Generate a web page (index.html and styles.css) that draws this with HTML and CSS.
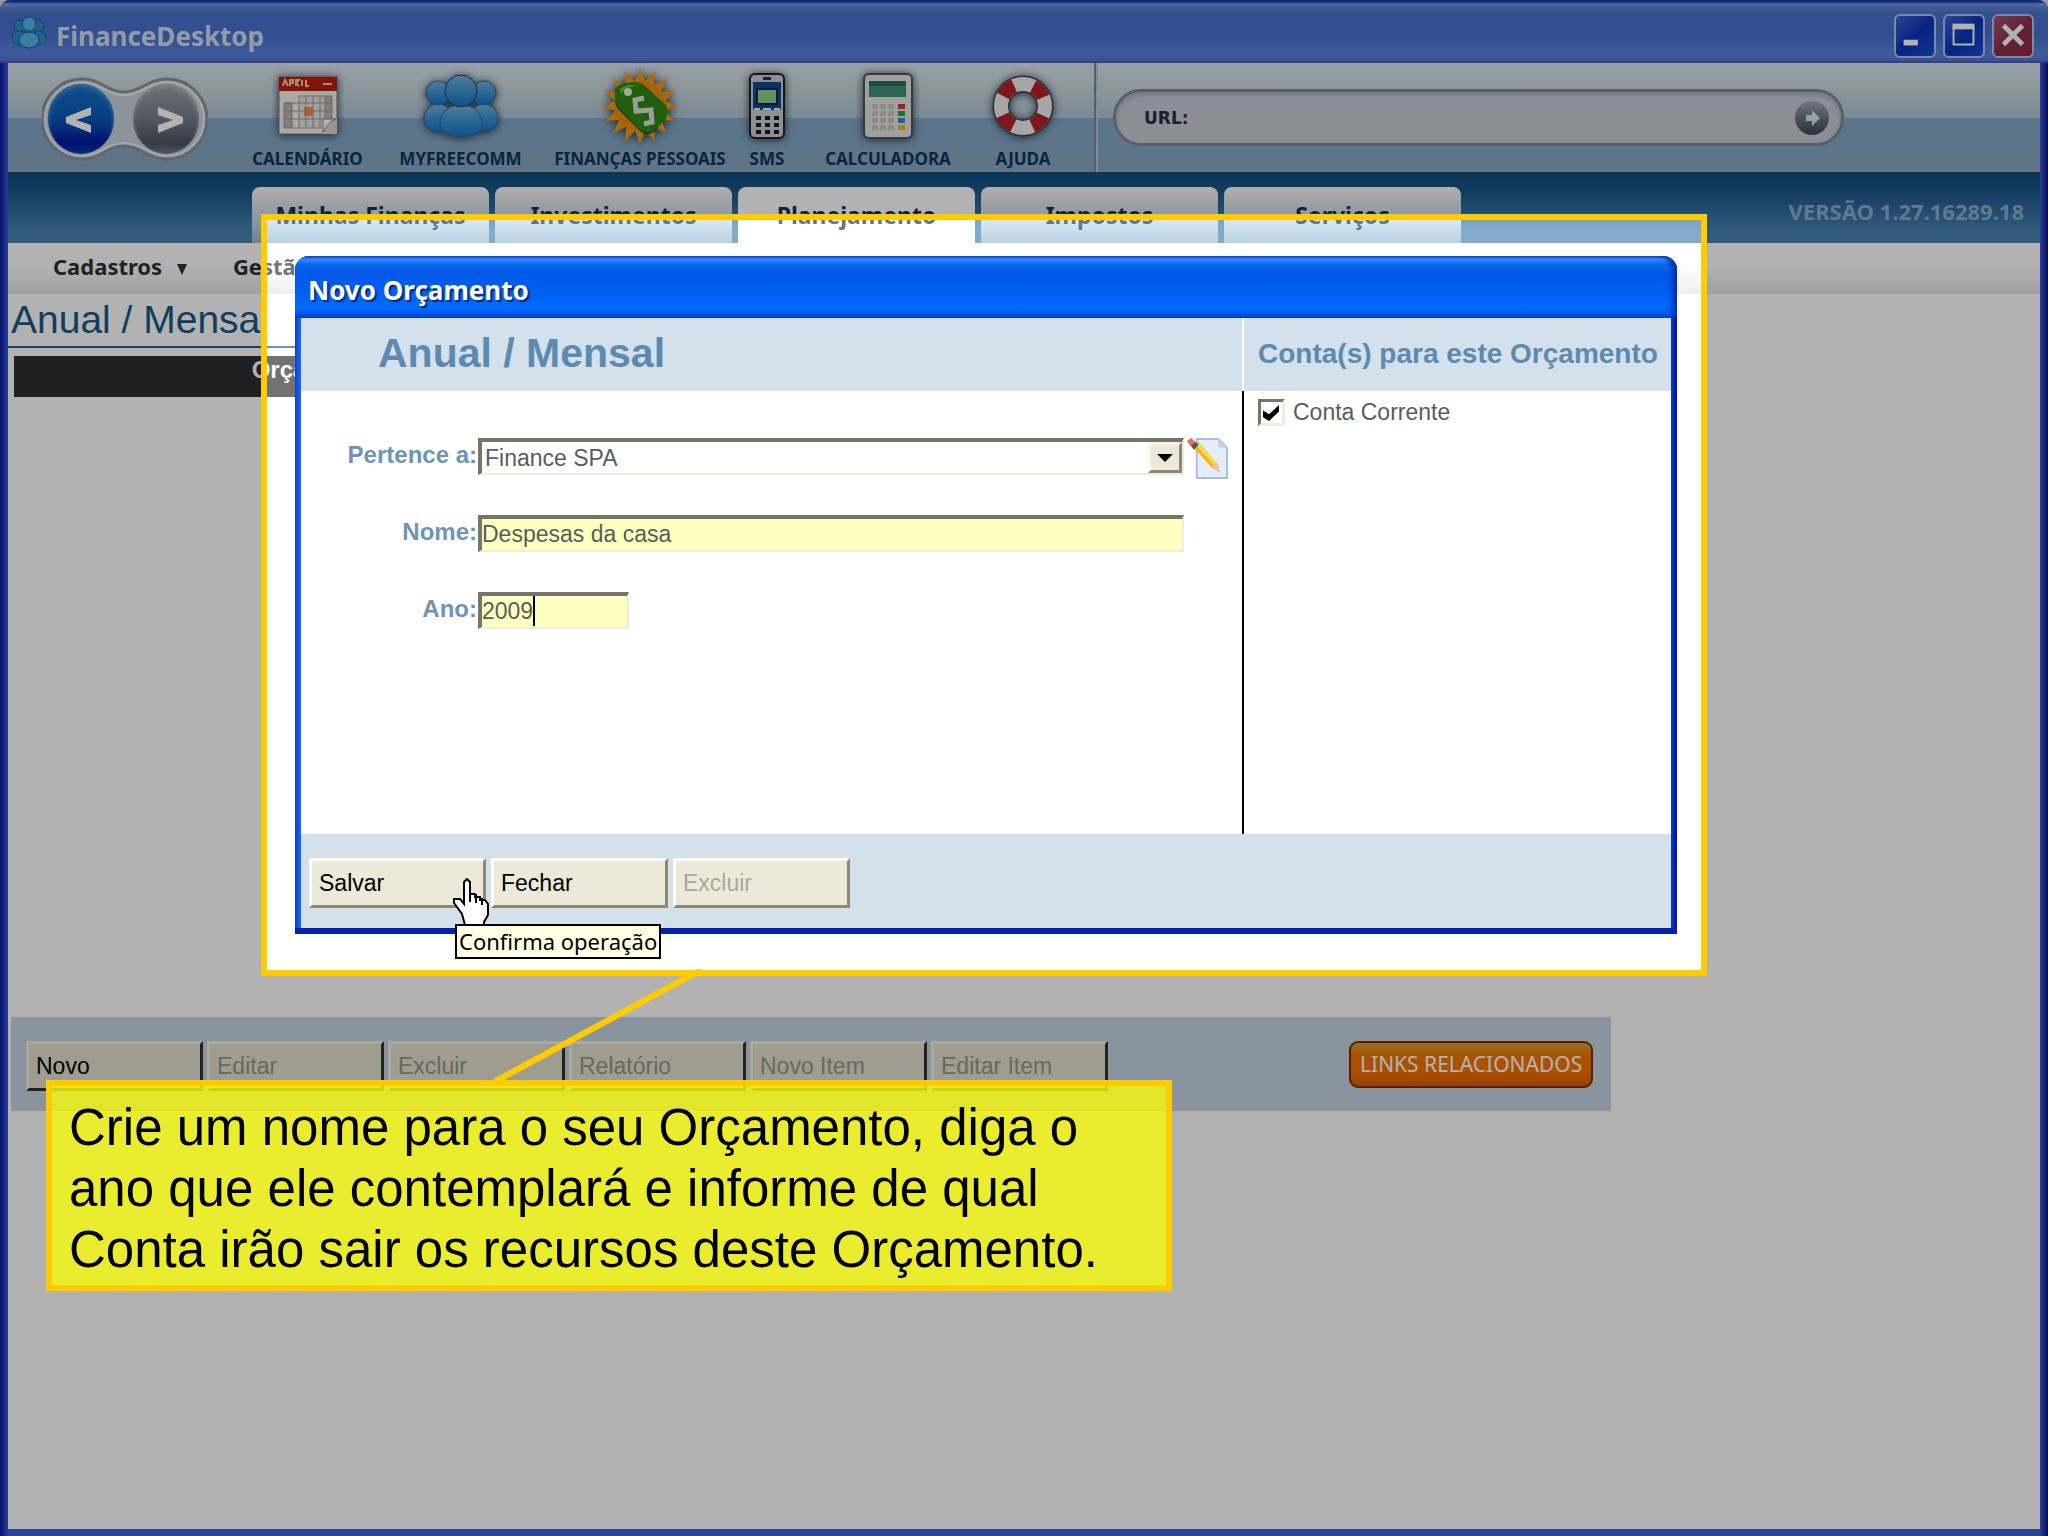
FILE: index.html
```html
<!DOCTYPE html>
<html lang="pt-BR">
<head>
    <meta charset="UTF-8">
    <meta name="viewport" content="width=device-width, initial-scale=1.0">
    <title>FinanceDesktop</title>
    <link rel="stylesheet" href="styles.css">
</head>
<body>

<div class="window">

    <!-- Barra de título -->
    <div class="titlebar">
        <svg class="app-icon" viewBox="0 0 34 34" aria-hidden="true">
            <g fill="#2f8fd0" stroke="#155a9c" stroke-width="1">
                <circle cx="8" cy="10" r="6"/><circle cx="26" cy="10" r="6"/>
                <circle cx="7" cy="22" r="7"/><circle cx="27" cy="22" r="7"/>
                <circle cx="17" cy="8" r="7" fill="#5ab4e8"/>
                <ellipse cx="17" cy="24" rx="10" ry="8" fill="#5ab4e8"/>
            </g>
        </svg>
        <span class="title-text">FinanceDesktop</span>
        <div class="window-buttons">
            <button class="win-btn" aria-label="Minimizar">
                <svg viewBox="0 0 40 40"><rect x="8" y="25" width="15" height="6" fill="#fff"/></svg>
            </button>
            <button class="win-btn" aria-label="Maximizar">
                <svg viewBox="0 0 40 40"><path d="M9 11h21v19H9z" fill="none" stroke="#fff" stroke-width="2"/><path d="M8 8h23v6H8z" fill="#fff"/></svg>
            </button>
            <button class="win-btn close" aria-label="Fechar janela">
                <svg viewBox="0 0 40 40"><path d="M10 10l20 20M30 10L10 30" stroke="#fff" stroke-width="5"/></svg>
            </button>
        </div>
    </div>

    <!-- Barra de ferramentas -->
    <div class="toolbar">
        <div class="history">
            <svg class="history-shape" viewBox="0 0 166 84" aria-hidden="true">
                <path d="M40 2C60 2 64 15 82 15S105 2 125 2a40 40 0 0 1 0 80C105 82 100 69 82 69S60 82 40 82A40 40 0 0 1 40 2z" fill="#c8d4de" stroke="#8a949c" stroke-width="3"/>
                <path d="M40 5C58 5 64 18 82 18S107 5 125 5a37 37 0 0 1 0 74C107 79 100 66 82 66S58 79 40 79A37 37 0 0 1 40 5z" fill="none" stroke="#e8eff5" stroke-width="2"/>
            </svg>
            <button class="orb orb-back" aria-label="Voltar">
                <svg viewBox="0 0 66 70"><path d="M43 23v8l-15 5 15 5v8L18 39v-6z" fill="#fff"/></svg>
            </button>
            <button class="orb orb-next" aria-label="Avançar">
                <svg viewBox="0 0 66 70"><path d="M25 23v8l15 5-15 5v8l25-10v-6z" fill="#fff"/></svg>
            </button>
        </div>

        <nav class="apps">
            <a href="#calendario" class="app">
                <svg width="66" height="66" viewBox="0 0 66 66">
                    <path d="M4 4h58v57H4z" fill="#f5f3f0" stroke="#777" stroke-width="1"/>
                    <path d="M4 4h58v14H4z" fill="#b8200c"/>
                    <path d="M8 13l2-6 3 6M15 13V7h3v3h-3M21 13V7h3l-3 3 3 3M27 7v6M31 7v6h3M48 11h9" fill="none" stroke="#f7c9a8" stroke-width="2"/>
                    <path d="M24 23h26v31H24z" fill="#e6e4e2"/>
                    <path d="M9 29h8v26H9zM50 23h7v25h-7z" fill="#b9b5b4"/>
                    <path d="M24 23h33M9 30h48M9 38h48M9 46h48M9 55h38M9 30v25M17 30v25M24 23v32M31 23v32M38 23v32M45 23v32M50 23v24M57 23v23" stroke="#9b989a" stroke-width="1" fill="none"/>
                    <path d="M29 34h9v9h-9z" fill="#ee8458"/>
                    <path d="M62 46v15H48V46z" fill="#d7d7d7"/>
                    <path d="M48 59V46h13c-6 2-9 6-13 13z" fill="#fff" stroke="#888"/>
                </svg>
                <span>CALENDÁRIO</span>
            </a>
            <a href="#myfreecomm" class="app">
                <svg width="84" height="66" viewBox="0 0 84 66">
                    <defs>
                        <linearGradient id="person" x1="0" y1="0" x2="0" y2="1">
                            <stop offset="0" stop-color="#78b4dc"/>
                            <stop offset="0.5" stop-color="#3c94d4"/>
                            <stop offset="1" stop-color="#1674c4"/>
                        </linearGradient>
                    </defs>
                    <g fill="url(#person)" stroke="#2c6a9f" stroke-width="1">
                        <circle cx="19" cy="45" r="14"/><circle cx="65" cy="45" r="14"/>
                        <circle cx="19" cy="20" r="12"/><circle cx="65" cy="20" r="12"/>
                        <path d="M21 52c0-14 9-20 21-20s21 6 21 20c0 7-9 12-21 12s-21-5-21-12z"/>
                        <circle cx="42" cy="18" r="16" stroke="#123f6c"/>
                    </g>
                </svg>
                <span>MYFREECOMM</span>
            </a>
            <a href="#financas" class="app">
                <svg width="80" height="80" viewBox="0 0 80 80">
                    <path d="M78 40 65 45 75 55 61 54 67 67 54 61 55 75 45 65 40 78 35 65 25 75 26 61 13 67 19 54 5 55 15 45 2 40 15 35 5 25 19 26 13 13 26 19 25 5 35 15 40 2 45 15 55 5 54 19 67 13 61 26 75 25 65 35z" fill="#f09a1c"/>
                    <circle cx="40" cy="40" r="25" fill="#f08a14"/>
                    <path d="M15 25c0-5 6-8 18-9 6 0 9 1 13 5l19 17c6 7 2 16-6 22-7 6-14 8-20 2L18 40c-3-4-4-9-3-15z" fill="#2f8a12"/>
                    <path d="M16 32c0 4 1 6 3 9l20 21c6 6 13 4 20-2-5 9-14 11-20 4L18 43c-3-4-3-7-2-11z" fill="#1c640c"/>
                    <path d="M20 23c4-4 12-5 18-3-7 0-13 2-17 8z" fill="#6cc23c"/>
                    <circle cx="28" cy="26" r="4" fill="#e9f4df"/>
                    <path d="M44 32l-9 2 1 11 15-1 1 12-8 2" fill="none" stroke="#dfe2dc" stroke-width="5"/>
                </svg>
                <span>FINANÇAS PESSOAIS</span>
            </a>
            <a href="#sms" class="app">
                <svg width="38" height="68" viewBox="0 0 38 68">
                    <rect x="2" y="2" width="34" height="64" rx="5" fill="#ccccd6" stroke="#1d2128" stroke-width="2"/>
                    <path d="M5 10h28v28H5z" fill="#0d4a90"/>
                    <path d="M15 5h8v3h-8z" fill="#333"/>
                    <path d="M9 17h20v15H9z" fill="#8fcf8c" stroke="#10284a" stroke-width="2"/>
                    <path d="M6 36h6v2H6zM15 36h8v2h-8zM26 36h6v2h-6z" fill="#e8eef8"/>
                    <path d="M8 44h5v4H8zM17 44h5v4h-5zM26 44h5v4h-5zM8 51h5v4H8zM17 51h5v4h-5zM26 51h5v4h-5zM8 58h5v4H8zM17 58h5v4h-5zM26 58h5v4h-5z" fill="#17191f"/>
                </svg>
                <span>SMS</span>
            </a>
            <a href="#calculadora" class="app">
                <svg width="54" height="68" viewBox="0 0 54 68">
                    <rect x="3" y="2" width="48" height="64" rx="5" fill="#e6e5e3" stroke="#4c5459" stroke-width="2"/>
                    <rect x="8" y="9" width="37" height="16" fill="#3f8f78"/>
                    <path d="M8 9h37v5H8z" fill="#2c6e5b"/>
                    <path d="M11 32h6v5h-6zM19 32h6v5h-6zM27 32h6v5h-6zM11 39h6v5h-6zM19 39h6v5h-6zM27 39h6v5h-6zM11 46h6v5h-6zM19 46h6v5h-6zM27 46h6v5h-6zM11 53h6v5h-6zM19 53h6v5h-6zM27 53h6v5h-6z" fill="#cbc9c8"/>
                    <path d="M37 32h7v5h-7z" fill="#e03030"/>
                    <path d="M37 39h7v5h-7z" fill="#27a336"/>
                    <path d="M37 46h7v5h-7z" fill="#3484e0"/>
                    <path d="M37 53h7v5h-7z" fill="#eeb81c"/>
                </svg>
                <span>CALCULADORA</span>
            </a>
            <a href="#ajuda" class="app">
                <svg width="64" height="64" viewBox="0 0 64 64">
                    <circle cx="32" cy="32" r="22" fill="none" stroke="#3d4348" stroke-width="17"/>
                    <circle cx="32" cy="32" r="22" fill="none" stroke="#f0eeee" stroke-width="14"/>
                    <circle cx="32" cy="32" r="22" fill="none" stroke="#b3202a" stroke-width="14" stroke-dasharray="15 19.56" stroke-dashoffset="-9.8"/>
                </svg>
                <span>AJUDA</span>
            </a>
        </nav>

        <form class="url-area">
            <div class="url-box">
                <label for="url">URL:</label>
                <input type="text" id="url">
                <button type="button" class="go" aria-label="Ir">
                    <svg viewBox="0 0 34 34"><path d="M11 14h6v-5l8 8-8 8v-5h-6z" fill="#dfe4e8"/></svg>
                </button>
            </div>
        </form>
    </div>

    <!-- Abas -->
    <div class="tabbar">
        <nav class="tabs">
            <a href="#minhas" class="tab">Minhas Finanças</a>
            <a href="#investimentos" class="tab">Investimentos</a>
            <a href="#planejamento" class="tab active">Planejamento</a>
            <a href="#impostos" class="tab">Impostos</a>
            <a href="#servicos" class="tab">Serviços</a>
        </nav>
        <span class="version">VERSÃO 1.27.16289.18</span>
    </div>

    <nav class="menu">
        <a href="#cadastros">Cadastros <span class="arrow"></span></a>
        <a href="#gestao">Gestão</a>
    </nav>

    <!-- Página -->
    <main class="page">
        <div class="content">
            <h1>Anual / Mensal</h1>
            <table class="budgets">
                <thead>
                    <tr><th>Orçamento</th><td></td></tr>
                </thead>
            </table>
            <div class="actions">
                <button class="btn">Novo</button>
                <button class="btn" disabled>Editar</button>
                <button class="btn" disabled>Excluir</button>
                <button class="btn" disabled>Relatório</button>
                <button class="btn" disabled>Novo Item</button>
                <button class="btn" disabled>Editar Item</button>
                <a href="#links" class="related">LINKS RELACIONADOS</a>
            </div>
        </div>
    </main>
</div>

<!-- Área em destaque com a janela de novo orçamento -->
<div class="spotlight">
    <form class="dialog">
        <div class="dialog-title">Novo Orçamento</div>
        <div class="dialog-body">
            <section class="col-main">
                <h2 class="band">Anual / Mensal</h2>
                <div class="fields">
                    <label for="pertence">Pertence a:</label>
                    <div class="field-line">
                        <div class="select-wrap">
                            <select id="pertence"><option>Finance SPA</option></select>
                            <span class="select-arrow"></span>
                        </div>
                        <button type="button" class="edit" aria-label="Editar">
                            <svg viewBox="0 0 42 42">
                                <path d="M10 1h22l9 9v31H10z" fill="#e3eefb" stroke="#a9bde2" stroke-width="2"/>
                                <path d="M32 1v9h9z" fill="#c4d2e4"/>
                                <path d="M6 9l6-5 19 22 3 9-8-4z" fill="#f7b512"/>
                                <path d="M12 5l19 21-3 2L9 7z" fill="#ffdb5c"/>
                                <path d="M0 3l4-3 5 4-5 5z" fill="#ea6a55"/>
                                <path d="M4 8l5-4 3 3-5 5z" fill="#4e5666"/>
                                <path d="M25 30l6-5 3 10z" fill="#f2c3a0"/>
                            </svg>
                        </button>
                    </div>
                    <label for="nome">Nome:</label>
                    <div class="field-line">
                        <input type="text" id="nome" class="text" value="Despesas da casa">
                    </div>
                    <label for="ano">Ano:</label>
                    <div class="field-line">
                        <input type="text" id="ano" class="text short" value="2009">
                        <span class="caret"></span>
                    </div>
                </div>
            </section>
            <section class="col-side">
                <h3 class="band">Conta(s) para este Orçamento</h3>
                <label class="check"><input type="checkbox" checked> Conta Corrente</label>
            </section>
        </div>
        <div class="dialog-footer">
            <div class="save">
                <button type="button" class="btn">Salvar</button>
                <svg class="cursor" viewBox="0 0 36 48" aria-hidden="true">
                    <path d="M12 47L9 36 1 25v-4h6l4 5V4l3-3 3 3v12h5v3h5v3h5l3 4v11l-4 7v4z" fill="#fff" stroke="#000" stroke-width="2"/>
                    <path d="M17 12v12M23 16v9M29 20v7" stroke="#000" stroke-width="2"/>
                </svg>
                <div class="tooltip" role="tooltip">Confirma operação</div>
            </div>
            <button type="button" class="btn">Fechar</button>
            <button type="button" class="btn" disabled>Excluir</button>
        </div>
    </form>
</div>

<!-- Legenda explicativa -->
<svg class="pointer" viewBox="0 0 210 116" aria-hidden="true">
    <path d="M3 112L206 2" stroke="#fc0" stroke-width="6" stroke-linecap="round"/>
</svg>
<p class="callout">Crie um nome para o seu Orçamento, diga o ano que ele contemplará e informe de qual Conta irão sair os recursos deste Orçamento.</p>

</body>
</html>
```

FILE: styles.css
```css
* {
    box-sizing: border-box;
}

body {
    margin: 0;
    position: relative;
    min-height: 100vh;
    overflow: hidden;
    background-color: #ddd;
    font-family: "Liberation Sans", Arial, sans-serif;
    font-size: 23px;
}

a {
    color: inherit;
    text-decoration: none;
}

button {
    padding: 0;
    border: none;
    font: inherit;
    cursor: pointer;
}

/* Janela principal */
.window {
    display: flex;
    flex-direction: column;
    min-height: 100vh;
    padding: 0 8px 7px;
    border-radius: 10px 10px 0 0;
    background: linear-gradient(to right, #0a1aa0, #3a5cd8 8px, #3a5cd8 calc(100% - 8px), #0a1080);
}

.titlebar {
    display: flex;
    align-items: center;
    height: 63px;
    margin: 0 -8px;
    padding: 8px 14px 0 12px;
    border-radius: 10px 10px 0 0;
    background: linear-gradient(to bottom, #1a3cb0 0, #1a3cb0 2px, #7a98dc 4px, #5c80d4 8px, #4a72cf 14px, #4a72cf 36px, #5684dc 54px, #5672d8 60px, #4054b8 63px);
    font-family: "Noto Sans", sans-serif;
    font-weight: bold;
    font-size: 26px;
    color: #d5def2;
}

.app-icon {
    width: 34px;
    height: 34px;
    margin: 0 10px 6px 0;
}

.title-text {
    flex: 1;
}

.window-buttons {
    display: flex;
    gap: 7px;
}

.win-btn {
    width: 42px;
    height: 44px;
    border: 2px solid #b4c2ee;
    border-radius: 6px;
    background: linear-gradient(135deg, #3c68d8, #0c34b8 50%, #1450d8);
}

.win-btn.close {
    background: linear-gradient(135deg, #a85468, #8c3050 50%, #942c40);
}

/* Barra de ferramentas */
.toolbar {
    display: flex;
    height: 109px;
    background: linear-gradient(to bottom, #dce4ee, #cddbe0 20%, #b2c6d6 50%, #86a8c6 51%, #86a8c6 75%, #8ba6be);
}

.history {
    position: relative;
    display: flex;
    gap: 19px;
    width: 166px;
    height: 84px;
    margin: 14px 25px 0 34px;
    padding: 7px 6px;
}

.history-shape {
    position: absolute;
    inset: 0;
}

.orb {
    position: relative;
    width: 66px;
    height: 70px;
    border-radius: 50%;
}

.orb-back {
    background: linear-gradient(to bottom, #1470c8, #0c58b8 50%, #0418a0 85%, #0c3cb0);
    box-shadow: inset 0 3px 4px #4c94d8;
}

.orb-next {
    background: linear-gradient(to bottom, #98a2ac, #78828e 45%, #4c5662 85%, #727c86);
    box-shadow: inset 0 3px 4px #b0bac4;
}

.apps {
    display: grid;
    grid-template-columns: 149px 157px 202px 52px 190px 80px;
}

.app {
    display: flex;
    flex-direction: column;
    align-items: center;
    justify-content: space-between;
    height: 109px;
    padding-bottom: 3px;
    font-family: "Noto Sans", sans-serif;
    font-weight: bold;
    font-size: 17px;
    line-height: 20px;
    color: #0d3556;
    white-space: nowrap;
}

.app svg {
    margin: auto;
    filter: drop-shadow(0 1px 4px #2c3a46);
}

.url-area {
    flex: 1;
    margin-left: 31px;
    padding: 26px 196px 0 17px;
    border-left: 2px solid #728aa2;
    box-shadow: inset 2px 0 0 #b8cad8;
}

.url-box {
    display: flex;
    align-items: center;
    height: 57px;
    padding: 0 12px 0 28px;
    border: 3px solid #7c8a96;
    border-radius: 28px;
    background-color: #c8ccd6;
    box-shadow: inset 0 3px 4px #a4adb8;
    font-family: "DejaVu Sans", sans-serif;
    font-weight: bold;
    font-size: 17px;
    color: #26303e;
}

.url-box input {
    flex: 1;
    min-width: 0;
    border: none;
    outline: none;
    background: none;
    font: inherit;
}

.go {
    width: 34px;
    height: 34px;
    border-radius: 50%;
    background: linear-gradient(to bottom, #a4acb4, #6c7884 45%, #3e4a56);
}

/* Abas */
.tabbar {
    display: flex;
    align-items: flex-end;
    height: 71px;
    padding: 0 16px 0 244px;
    background: linear-gradient(to bottom, #114d7e, #1a5688 25%, #4580b2 80%);
    font-family: "Noto Sans", sans-serif;
    font-weight: bold;
}

.tabs {
    display: flex;
    flex: 1;
    gap: 6px;
}

.tab {
    width: 237px;
    height: 56px;
    border-radius: 8px 8px 0 0;
    background: linear-gradient(to bottom, #fcfcfa, #dce3ea 35%, #c2d9ec 65%, #97bad0);
    font-size: 23px;
    line-height: 57px;
    color: #12325a;
    text-align: center;
}

.tab.active {
    background: #fff;
}

.version {
    font-size: 22px;
    line-height: 30px;
    margin-bottom: 17px;
    color: #8aaecb;
}

.menu {
    display: flex;
    gap: 46px;
    height: 51px;
    padding-left: 45px;
    background: linear-gradient(to bottom, #fff 45%, #e6e6e6);
    font-family: "Noto Sans", sans-serif;
    font-weight: bold;
    font-size: 22px;
    line-height: 46px;
    color: #303030;
}

.arrow {
    display: inline-block;
    margin-left: 9px;
    border: 5px solid transparent;
    border-top: 11px solid #303030;
    border-bottom: none;
}

/* Página */
.page {
    flex: 1;
    background-color: #fff;
}

.page h1 {
    margin: 0;
    padding-left: 3px;
    border-bottom: 2px solid #25619a;
    font-weight: normal;
    font-size: 39px;
    line-height: 52px;
    color: #18588a;
}

.content {
    width: 79%;
}

.budgets {
    width: 79%;
    height: 41px;
    margin: 8px 0 0 6px;
    border-collapse: collapse;
    background-color: #2e2e2e;
    color: #fff;
}

.budgets th,
.budgets td {
    padding: 0;
    vertical-align: top;
    font-size: 24px;
    line-height: 28px;
}

.budgets th {
    width: 602px;
}

.actions {
    display: flex;
    align-items: flex-start;
    gap: 4px;
    height: 94px;
    margin: 620px 2px 0 3px;
    padding: 24px 18px 0 15px;
    background-color: #c6d4e4;
}

.btn {
    width: 177px;
    height: 50px;
    padding: 0 7px;
    border: 3px solid;
    border-color: #fff #8c8878 #8c8878 #fff;
    background-color: #ece9d8;
    font-size: 23px;
    text-align: left;
    color: #000;
}

.btn:disabled {
    color: #aca899;
    cursor: default;
}

.actions .btn {
    border-color: #f4f2e6 #33332c #33332c #f4f2e6;
    background-color: #e4e0ce;
}

.actions .btn:disabled {
    color: #98958a;
}

.related {
    margin-left: auto;
    padding: 0 9px;
    border: 2px solid #7e2c00;
    border-radius: 9px;
    background: linear-gradient(to bottom, #d8a038, #f07800 30%, #f87000 70%, #d06000);
    font-family: "Noto Sans", sans-serif;
    font-size: 21px;
    line-height: 43px;
    color: #fff;
    white-space: nowrap;
}

/* Destaque: escurece tudo em volta */
.spotlight {
    position: absolute;
    top: 214px;
    left: 261px;
    right: 341px;
    padding: 36px 24px 36px 28px;
    border: 6px solid #fc0;
    background-color: rgba(255, 255, 255, 0.33);
    box-shadow: 0 0 0 9999px rgba(0, 0, 0, 0.3);
}

.dialog {
    padding: 0 6px 6px;
    border-radius: 14px 14px 0 0;
    background: linear-gradient(to right, #0a3cd8, #1a6cf8 6px, #0838d0 calc(100% - 5px), #001090);
    box-shadow: inset 0 -6px 0 #0420b0;
}

.dialog-title {
    margin: 0 -6px;
    padding: 0 13px;
    height: 62px;
    border-radius: 14px 14px 0 0;
    background: linear-gradient(to bottom, #0848d8, #3c94ff 3px, #0c68f0 8px, #0058e6 18px, #0060f4 38px, #006cff 52px, #0048d8 62px);
    box-shadow: inset -5px 0 5px #0030b8;
    font-family: "Noto Sans", sans-serif;
    font-weight: bold;
    font-size: 26px;
    line-height: 68px;
    color: #fff;
    text-shadow: 2px 2px 1px #0a2a80;
}

.dialog-body {
    display: flex;
    height: 516px;
    background-color: #fff;
}

.col-main {
    flex: 1;
}

.col-side {
    width: 429px;
    border-left: 2px solid #000;
}

.band {
    margin: 0;
    height: 73px;
    background-color: #d4e0ec;
    color: #5c8ab0;
    line-height: 71px;
}

.col-main .band {
    padding-left: 77px;
    font-size: 41px;
}

.col-side .band {
    margin-left: -2px;
    padding-left: 14px;
    border-left: 2px solid #fff;
    font-size: 28px;
    white-space: nowrap;
}

.fields {
    display: grid;
    grid-template-columns: 176px 1fr;
    column-gap: 1px;
    row-gap: 40px;
    padding: 47px 14px 0 0;
}

.fields label {
    font-weight: bold;
    font-size: 24px;
    line-height: 34px;
    color: #6c94b8;
    text-align: right;
}

.field-line {
    position: relative;
    display: flex;
    height: 37px;
    gap: 3px;
}

.select-wrap {
    position: relative;
    flex: 1;
}

.select-arrow {
    position: absolute;
    top: 4px;
    right: 2px;
    display: flex;
    align-items: center;
    justify-content: center;
    width: 34px;
    height: 31px;
    border: 3px solid;
    border-color: #f8f6ee #8c8878 #8c8878 #f8f6ee;
    background-color: #ece9d8;
    pointer-events: none;
}

.select-arrow::before {
    content: "";
    border: 8px solid transparent;
    border-top: 8px solid #000;
    border-bottom: none;
}

select,
.text {
    height: 37px;
    border: 4px solid;
    border-color: #77756a #eeece4 #eeece4 #77756a;
    border-right-width: 2px;
    border-bottom-width: 2px;
    border-radius: 0;
    outline: none;
    font: inherit;
    color: #5c5c5c;
}

select {
    appearance: none;
    width: 100%;
    padding: 0 3px;
    background-color: #fff;
}

.text {
    flex: 1;
    margin-right: 44px;
    padding: 0;
    background-color: #ffffc0;
}

.text.short {
    flex: none;
    width: 151px;
}

.caret {
    position: absolute;
    top: 4px;
    left: 55px;
    width: 2px;
    height: 30px;
    background-color: #000;
}

.edit {
    width: 41px;
    height: 41px;
    background: none;
}

.check {
    display: flex;
    align-items: center;
    gap: 8px;
    padding: 8px 0 0 14px;
    color: #5c5c5c;
}

.check input {
    appearance: none;
    width: 27px;
    height: 27px;
    margin: 0;
    padding: 3px 2px;
    border: 3px solid;
    border-color: #77756a #eeece4 #eeece4 #77756a;
    background-color: #fff;
}

.check input:checked::before {
    content: "";
    display: block;
    width: 16px;
    height: 16px;
    background-color: #000;
    clip-path: polygon(0 35%, 38% 58%, 100% 0, 100% 40%, 38% 100%, 0 76%);
}

.dialog-footer {
    display: flex;
    gap: 5px;
    height: 94px;
    padding: 24px 8px 0;
    background-color: #d4e0ea;
}

.save {
    position: relative;
}

.cursor {
    position: absolute;
    top: 20px;
    left: 144px;
    width: 36px;
    height: 48px;
}

.tooltip {
    position: absolute;
    top: 66px;
    left: 146px;
    padding: 0 2px;
    border: 2px solid #000;
    background-color: #ffffe4;
    font-family: "Noto Sans", sans-serif;
    font-size: 22px;
    line-height: 31px;
    color: #000;
    white-space: nowrap;
}

/* Legenda */
.pointer {
    position: absolute;
    top: 969px;
    left: 493px;
    width: 210px;
    height: 116px;
}

.callout {
    position: absolute;
    top: 1080px;
    left: 46px;
    width: 55%;
    margin: 0;
    padding: 11px 14px 5px 17px;
    border: 6px solid #fc0;
    background-color: rgba(248, 250, 12, 0.8);
    font-size: 51px;
    line-height: 61px;
    color: #000;
}
```
